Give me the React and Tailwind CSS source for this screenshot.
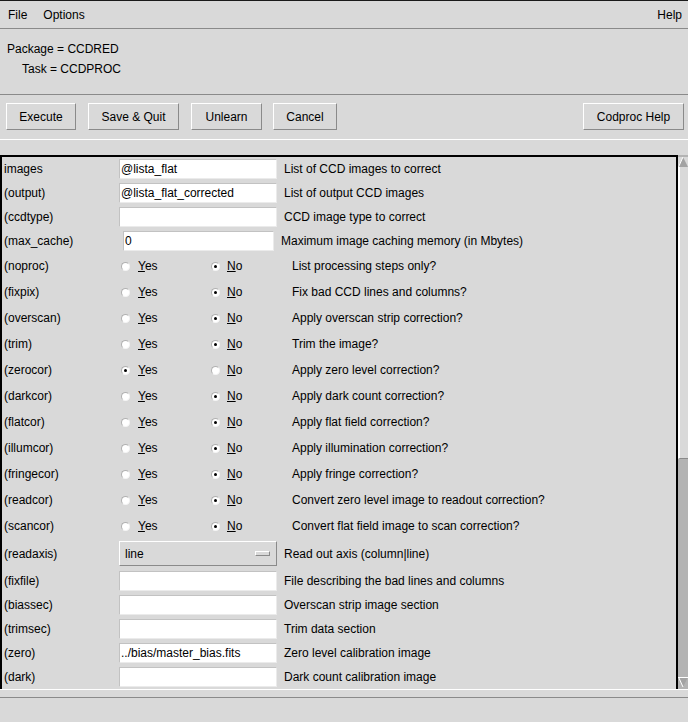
import React from "react";

const F = { fontFamily: '"Liberation Sans", Arial, sans-serif' };

function Btn({ children, w }) {
  return (
    <div
      className={`${w} h-[27px] flex items-center justify-center border border-t-white border-l-white border-r-[#8a8a8a] border-b-[#8a8a8a] text-[12px] text-black`}
    >
      {children}
    </div>
  );
}

function Entry({ value, w = "w-[158px]" }) {
  return (
    <div className={`${w} h-[20px] bg-white border border-[#c2c2c2] border-r-[#ebebeb] border-b-[#ebebeb] flex items-center pl-[1px] text-[12px] text-black whitespace-nowrap overflow-hidden`}>
      {value}
    </div>
  );
}

function Radio({ on }) {
  return (
    <div className="w-[9px] h-[9px] rounded-full bg-white border border-[#b0b0b0] border-r-[#f4f4f4] border-b-[#f4f4f4] flex items-center justify-center">
      {on && <div className="w-[3px] h-[3px] rounded-full bg-black" />}
    </div>
  );
}

function EntryRow({ label, value, desc, h = "h-[24px]" }) {
  return (
    <div className={`flex items-center ${h}`}>
      <div className="w-[117px] pl-[2px]">{label}</div>
      <Entry value={value} />
      <div className="ml-[7px] whitespace-nowrap">{desc}</div>
    </div>
  );
}

function RadioRow({ label, yes, desc }) {
  return (
    <div className="flex items-center h-[26px]">
      <div className="w-[119px] pl-[2px]">{label}</div>
      <div className="w-[90px] flex items-center">
        <Radio on={yes} />
        <span className="ml-[8px]">
          <span className="underline">Y</span>es
        </span>
      </div>
      <div className="w-[81px] flex items-center">
        <Radio on={!yes} />
        <span className="ml-[7px]">
          <span className="underline">N</span>o
        </span>
      </div>
      <div className="whitespace-nowrap">{desc}</div>
    </div>
  );
}

const radios = [
  ["(noproc)", false, "List processing steps only?"],
  ["(fixpix)", false, "Fix bad CCD lines and columns?"],
  ["(overscan)", false, "Apply overscan strip correction?"],
  ["(trim)", false, "Trim the image?"],
  ["(zerocor)", true, "Apply zero level correction?"],
  ["(darkcor)", false, "Apply dark count correction?"],
  ["(flatcor)", false, "Apply flat field correction?"],
  ["(illumcor)", false, "Apply illumination correction?"],
  ["(fringecor)", false, "Apply fringe correction?"],
  ["(readcor)", false, "Convert zero level image to readout correction?"],
  ["(scancor)", false, "Convert flat field image to scan correction?"],
];

export default function App() {
  return (
    <div style={F} className="w-[688px] h-[722px] bg-[#d9d9d9] text-black text-[12px] flex flex-col overflow-hidden">
      <div className="h-[1px] bg-[#1a1a1a]" />
      {/* menu */}
      <div className="h-[28px] flex items-center border-b border-[#8a8a8a] pl-[8px] pr-[6px]">
        <span>File</span>
        <span className="ml-[16px]">Options</span>
        <span className="ml-auto">Help</span>
      </div>
      {/* header */}
      <div className="h-[66px] border-b border-[#8a8a8a] pt-[10px] leading-[20px]">
        <div className="pl-[7px]">Package = CCDRED</div>
        <div className="pl-[22px]">Task = CCDPROC</div>
      </div>
      {/* buttons */}
      <div className="h-[45px] border-b border-white pt-[8px] flex items-start pl-[6px] pr-[4px]">
        <Btn w="w-[70px]">Execute</Btn>
        <div className="w-[12px]" />
        <Btn w="w-[91px]">Save &amp; Quit</Btn>
        <div className="w-[12px]" />
        <Btn w="w-[71px]">Unlearn</Btn>
        <div className="w-[11px]" />
        <Btn w="w-[64px]">Cancel</Btn>
        <div className="flex-1" />
        <Btn w="w-[101px]">Codproc Help</Btn>
      </div>
      <div className="h-[15px]" />
      {/* panel */}
      <div className="flex h-[534px]">
        <div className="w-[678px] border-2 border-b-0 border-black flex flex-col overflow-hidden">
          <EntryRow label="images" value="@lista_flat" desc="List of CCD images to correct" />
          <EntryRow label="(output)" value="@lista_flat_corrected" desc="List of output CCD images" />
          <EntryRow label="(ccdtype)" value="" desc="CCD image type to correct" />
          <div className="flex items-center h-[24px]">
            <div className="w-[121px] pl-[2px]">(max_cache)</div>
            <Entry value="0" w="w-[151px]" />
            <div className="ml-[7px] whitespace-nowrap">Maximum image caching memory (in Mbytes)</div>
          </div>
          {radios.map(([l, y, d]) => (
            <RadioRow key={l} label={l} yes={y} desc={d} />
          ))}
          <div className="flex items-center h-[29px]">
            <div className="w-[117px] pl-[2px]">(readaxis)</div>
            <div className="w-[158px] h-[25px] border border-t-white border-l-white border-r-[#8a8a8a] border-b-[#8a8a8a] flex items-center pl-[5px] pr-[6px]">
              <span>line</span>
              <div className="ml-auto w-[15px] h-[5px] bg-[#d9d9d9] border border-t-white border-l-white border-r-[#8a8a8a] border-b-[#8a8a8a]" />
            </div>
            <div className="ml-[7px] whitespace-nowrap">Read out axis (column|line)</div>
          </div>
          <EntryRow label="(fixfile)" value="" desc="File describing the bad lines and columns" h="h-[25px]" />
          <EntryRow label="(biassec)" value="" desc="Overscan strip image section" />
          <EntryRow label="(trimsec)" value="" desc="Trim data section" />
          <EntryRow label="(zero)" value="../bias/master_bias.fits" desc="Zero level calibration image" />
          <EntryRow label="(dark)" value="" desc="Dark count calibration image" />
        </div>
        {/* scrollbar */}
        <div className="w-[10px] flex flex-col pt-[2px] bg-[#b3b3b3]">
          <svg width="10" height="10" viewBox="0 0 10 10" className="block bg-[#d9d9d9]">
            <polygon points="5,0 10,10 0,10" fill="#a3a3a3" />
            <line x1="5" y1="0" x2="0.5" y2="10" stroke="#ffffff" strokeWidth="1" />
          </svg>
          <div className="h-[292px] bg-[#d9d9d9] border-l-2 border-white border-b border-b-[#8a8a8a]" />
          <div className="flex-1" />
          <svg width="10" height="10" viewBox="0 0 10 10" className="block mb-[2px]">
            <polygon points="0,0 10,0 5,10" fill="#a3a3a3" />
            <line x1="0" y1="0.5" x2="10" y2="0.5" stroke="#ffffff" strokeWidth="1" />
            <line x1="0.5" y1="0" x2="5" y2="10" stroke="#ffffff" strokeWidth="1" />
          </svg>
        </div>
      </div>
      <div className="h-[1px] bg-white" />
      <div className="h-[8px] border-b border-[#8a8a8a]" />
      <div className="flex-1" />
    </div>
  );
}
